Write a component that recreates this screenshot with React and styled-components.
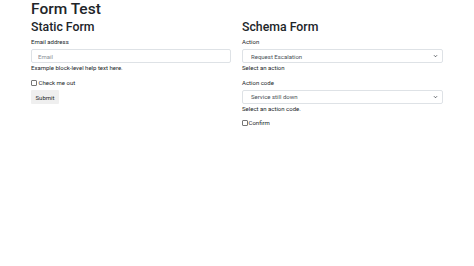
import React from "react";
import styled, { createGlobalStyle } from "styled-components";

const GlobalStyle = createGlobalStyle`
    body {
        margin: 0;
        background: #ffffff;
        font-family: Roboto, "Liberation Sans", sans-serif;
        color: #212529;
    }
`;

const Page = styled.div`
    width: 474px;
    height: 266px;
    padding: 0 31px;
    box-sizing: border-box;
`;

const Title = styled.h1`
    margin: 0;
    font-size: 15.5px;
    font-weight: 500;
    line-height: 19px;
`;

const Columns = styled.div`
    display: grid;
    grid-template-columns: 200px 201px;
    column-gap: 11px;
`;

const Column = styled.div`
    display: flex;
    flex-direction: column;
`;

const SectionTitle = styled.h2`
    margin: 1px 0 3px;
    font-size: 12.3px;
    font-weight: 500;
    line-height: 15px;
`;

const Group = styled.div`
    display: flex;
    flex-direction: column;
    margin-bottom: ${props => props.gap || "6.5px"};
`;

const Label = styled.label`
    font-size: 6px;
    line-height: 8px;
    margin-bottom: 3px;
`;

const Input = styled.input`
    box-sizing: border-box;
    width: 100%;
    height: 14px;
    padding: 0 6px;
    font-family: inherit;
    font-size: 6px;
    color: #495057;
    border: 1px solid #dee2e6;
    border-radius: 2px;
    outline: none;
    &::placeholder {
        color: #8a8f94;
    }
`;

const SelectBox = styled.div`
    box-sizing: border-box;
    height: 14px;
    padding: 0 4px 0 8px;
    display: flex;
    align-items: center;
    justify-content: space-between;
    font-size: 6px;
    color: #495057;
    border: 1px solid #dee2e6;
    border-radius: 2px;
`;

const Help = styled.div`
    font-size: 6px;
    line-height: 8px;
    margin-top: 1px;
`;

const CheckRow = styled.label`
    display: flex;
    align-items: center;
    font-size: 6px;
    line-height: 8px;
    margin-bottom: ${props => props.gap || "4px"};
`;

const Box = styled.span`
    width: 4px;
    height: 4px;
    border: 0.5px solid #767676;
    border-radius: 1px;
    margin-right: ${props => props.space || "1.5px"};
`;

const ButtonRow = styled.div`
    display: flex;
`;

const Button = styled.button`
    width: 28px;
    height: 14px;
    padding: 0;
    font-family: inherit;
    font-size: 6px;
    color: #212529;
    background: #efefef;
    border: none;
    border-radius: 1px;
`;

function Chevron() {
    return (
        <svg width="5" height="4" viewBox="0 0 10 8">
            <path d="M2 2.5 L5 5.5 L8 2.5" stroke="#343a40" strokeWidth="1.6" fill="none" />
        </svg>
    );
}

export default function App() {
    return (
        <Page>
            <GlobalStyle />
            <Title>Form Test</Title>
            <Columns>
                <Column>
                    <SectionTitle>Static Form</SectionTitle>
                    <Group gap="7px">
                        <Label>Email address</Label>
                        <Input placeholder="Email" />
                        <Help>Example block-level help text here.</Help>
                    </Group>
                    <CheckRow gap="3px">
                        <Box />Check me out
                    </CheckRow>
                    <ButtonRow>
                        <Button>Submit</Button>
                    </ButtonRow>
                </Column>
                <Column>
                    <SectionTitle>Schema Form</SectionTitle>
                    <Group>
                        <Label>Action</Label>
                        <SelectBox>Request Escalation<Chevron /></SelectBox>
                        <Help>Select an action</Help>
                    </Group>
                    <Group>
                        <Label>Action code</Label>
                        <SelectBox>Service still down<Chevron /></SelectBox>
                        <Help>Select an action code.</Help>
                    </Group>
                    <CheckRow>
                        <Box space="0.5px" />Confirm
                    </CheckRow>
                </Column>
            </Columns>
        </Page>
    );
}
